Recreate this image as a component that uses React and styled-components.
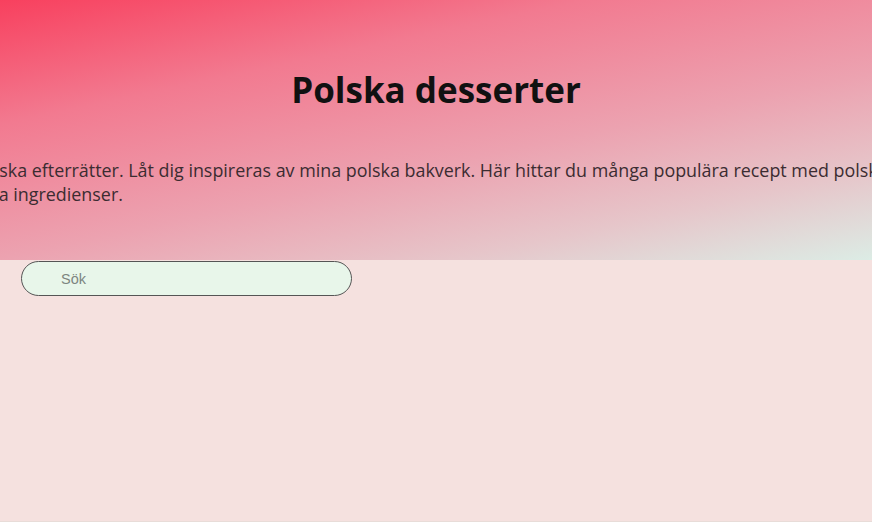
import styled, { createGlobalStyle } from 'styled-components';

const GlobalStyle = createGlobalStyle`
  html,
  body {
    margin: 0;
    padding: 0;
    background-color: #ffffff;
  }

  body {
    font-family: 'Open Sans', 'Noto Sans', sans-serif;
    overflow: hidden;
  }
`;

const Page = styled.div`
  width: 100%;
  min-height: 521px;
  background-color: #f5e1df;
  border-bottom: 1px solid #e8dcd8;
  overflow: hidden;
`;

const Header = styled.header`
  height: 260px;
  display: flex;
  flex-direction: column;
  background: linear-gradient(
    168deg,
    #f8405e 0%,
    #f27a90 28%,
    #eca2b0 58%,
    #e6c6ca 80%,
    #dcece5 100%
  );
`;

const Title = styled.h1`
  margin: 68px 0 0;
  text-align: center;
  font-size: 35px;
  line-height: 44px;
  font-weight: 700;
  color: #111111;
`;

const Intro = styled.p`
  margin: 46px 0 0 -27px;
  font-size: 17.9px;
  line-height: 24px;
  color: #3b2c31;

  span {
    display: block;
    white-space: nowrap;
  }
`;

const SearchRow = styled.div`
  padding: 1px 0 0 21px;
`;

const SearchInput = styled.input`
  box-sizing: border-box;
  width: 331px;
  height: 35px;
  padding: 0 0 0 39px;
  border: 1.5px solid #555555;
  border-radius: 18px;
  background-color: #e8f6ea;
  font-family: 'Liberation Sans', Arial, sans-serif;
  font-size: 14.5px;
  color: #333333;
  outline: none;

  &::placeholder {
    color: #7d8580;
  }
`;

export default function App() {
  return (
    <>
      <GlobalStyle />
      <Page>
        <Header>
          <Title>Polska desserter</Title>
          <Intro>
            <span>
              polska efterrätter. Låt dig inspireras av mina polska bakverk. Här hittar du många
              populära recept med polska och
            </span>
            <span>äkta ingredienser.</span>
          </Intro>
        </Header>
        <SearchRow>
          <SearchInput type="text" placeholder="Sök" />
        </SearchRow>
      </Page>
    </>
  );
}
